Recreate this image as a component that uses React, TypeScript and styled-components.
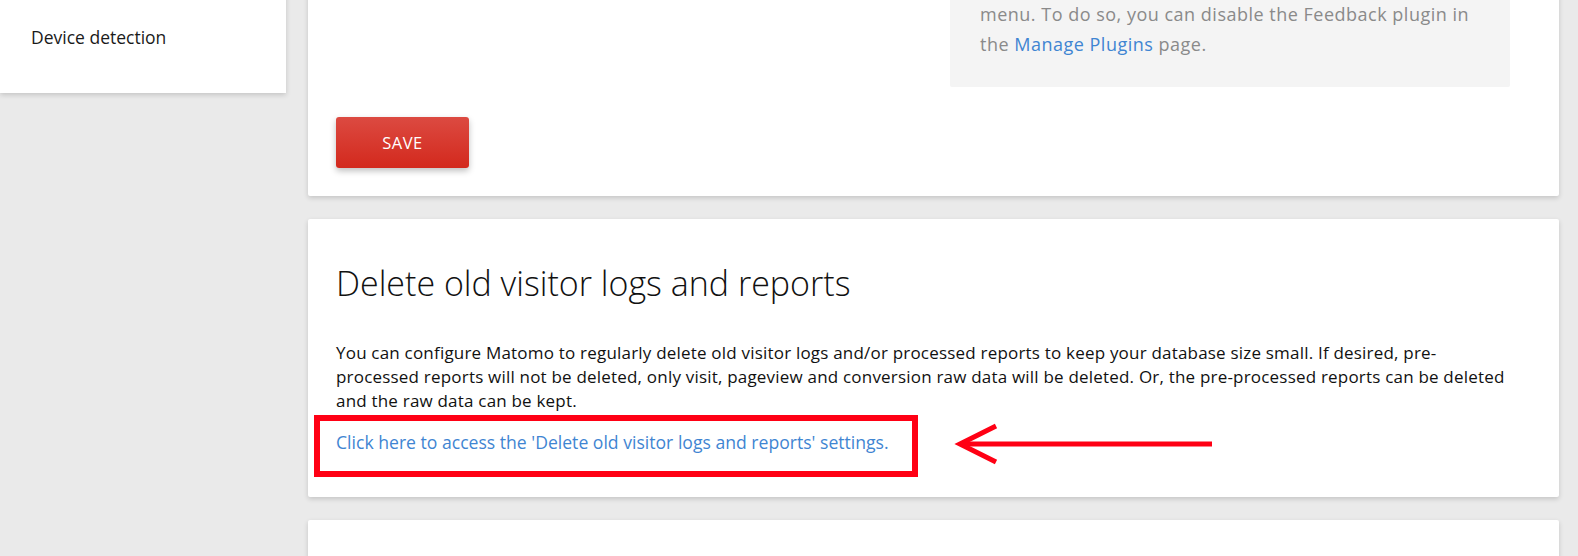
import styled, { createGlobalStyle } from "styled-components";

const GlobalStyle = createGlobalStyle`
  html, body {
    margin: 0;
    padding: 0;
    background: #eaeaea;
    overflow: hidden;
  }
  body {
    font-family: "Open Sans", "Liberation Sans", sans-serif;
    color: #212121;
  }
`;

const Page = styled.div`
  display: flex;
  align-items: flex-start;
  gap: 22px;
  margin-top: -80px;
  width: 1557px;
`;

const Sidebar = styled.nav`
  width: 286px;
  flex: none;
  background: #fff;
  padding: 45px 0 32px;
  box-shadow: 0 2px 5px rgba(0, 0, 0, 0.16);
  box-sizing: border-box;
`;

const MenuItem = styled.div`
  height: 48px;
  line-height: 48px;
  padding-left: 31px;
  font-size: 17.5px;
  color: #1a1a1a;
`;

const Main = styled.main`
  flex: 1;
  display: flex;
  flex-direction: column;
  gap: 23px;
`;

interface CardProps {
  pad?: string;
}

const Card = styled.section<CardProps>`
  position: relative;
  background: #fff;
  border-radius: 2px;
  box-shadow: 0 2px 5px rgba(0, 0, 0, 0.16);
  padding: ${(p) => p.pad ?? "28px"};
`;

const FormRow = styled.div`
  display: grid;
  grid-template-columns: 614px 560px;
`;

const InlineHelp = styled.div`
  grid-column: 2;
  background: #f4f4f4;
  border-radius: 2px;
  padding: 21px 30px 28px 30px;
  font-size: 18px;
  letter-spacing: 0.5px;
  line-height: 30px;
  color: #8a8a8a;
`;

const Link = styled.a`
  color: #3f85d2;
  text-decoration: none;
`;

const SaveButton = styled.button`
  margin-top: 30px;
  width: 133px;
  height: 51px;
  border: none;
  border-radius: 3px;
  background: linear-gradient(#dc4a41, #d3291d);
  color: #fff;
  font-family: inherit;
  font-size: 16.5px;
  letter-spacing: 0.5px;
  box-shadow: 0 3px 6px rgba(0, 0, 0, 0.25);
`;

const Title = styled.h2`
  margin: 17px 0 39px;
  font-size: 34px;
  line-height: 38px;
  font-weight: 300;
  color: #111;
`;

const Text = styled.p`
  width: 1195px;
  margin: 0;
  font-size: 17px;
  letter-spacing: 0.2px;
  line-height: 24px;
  color: #111;
`;

const LinkLine = styled.p`
  margin: 17px 0 0;
  font-size: 17.6px;
  line-height: 24px;
`;

const Highlight = styled.div`
  position: absolute;
  left: 6px;
  top: 196px;
  width: 604px;
  height: 62px;
  border: 6px solid #ff0014;
  box-sizing: border-box;
`;

const Arrow = styled.svg`
  position: absolute;
  left: 646px;
  top: 201px;
`;

export default function App() {
  return (
    <>
      <GlobalStyle />
      <Page>
        <Sidebar>
          <MenuItem>System check</MenuItem>
          <MenuItem>Device detection</MenuItem>
        </Sidebar>
        <Main>
          <Card>
            <FormRow>
              <InlineHelp>
                You can also hide the Feedback link shown in the top
                menu. To do so, you can disable the Feedback plugin in the{" "}
                <Link href="#">Manage Plugins</Link> page.
              </InlineHelp>
            </FormRow>
            <SaveButton>SAVE</SaveButton>
          </Card>
          <Card pad="28px 28px 43px">
            <Title>Delete old visitor logs and reports</Title>
            <Text>
              You can configure Matomo to regularly delete old visitor logs and/or
              processed reports to keep your database size small. If desired, pre-
              <br />
              processed reports will not be deleted, only visit, pageview and
              conversion raw data will be deleted. Or, the pre-processed reports can
              be deleted and the raw data can be kept.
            </Text>
            <LinkLine>
              <Link href="#">
                Click here to access the 'Delete old visitor logs and reports' settings.
              </Link>
            </LinkLine>
            <Highlight />
            <Arrow width="262" height="50" viewBox="0 0 262 50">
              <line x1="8" y1="24" x2="258" y2="24" stroke="#ff0014" strokeWidth="5" />
              <polyline
                points="42,6 6,24 42,42"
                fill="none"
                stroke="#ff0014"
                strokeWidth="5"
              />
            </Arrow>
          </Card>
          <Card pad="60px 28px" />
        </Main>
      </Page>
    </>
  );
}
